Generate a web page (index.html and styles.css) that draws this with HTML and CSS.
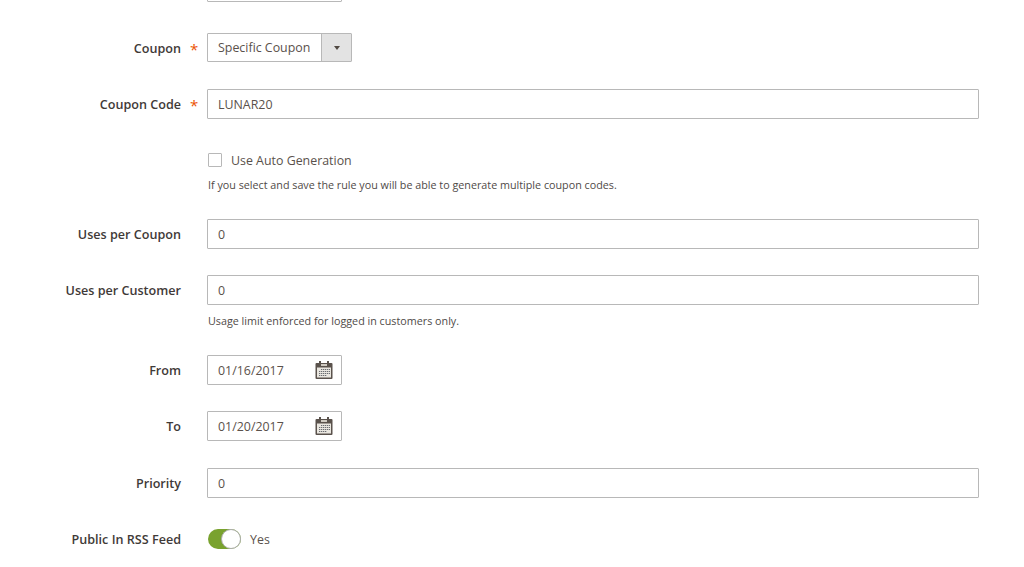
FILE: index.html
```html
<!DOCTYPE html>
<html lang="en">
<head>
    <meta charset="UTF-8">
    <title>Cart Price Rule</title>
    <link rel="stylesheet" href="styles.css">
</head>
<body>
    <form class="form">
        <div class="row row-clipped">
            <div class="label"></div>
            <div class="control"><div class="multi-box"></div></div>
        </div>

        <div class="row row-select">
            <div class="label required">Coupon</div>
            <div class="control">
                <div class="select-box">
                    <span class="select-text">Specific Coupon</span>
                    <span class="select-arrow"><span class="arrow-down"></span></span>
                </div>
            </div>
        </div>

        <div class="row">
            <div class="label required">Coupon Code</div>
            <div class="control"><div class="input">LUNAR20</div></div>
        </div>

        <div class="row row-check">
            <div class="label"></div>
            <div class="control">
                <div class="check-line"><span class="checkbox"></span><span>Use Auto Generation</span></div>
                <div class="note">If you select and save the rule you will be able to generate multiple coupon codes.</div>
            </div>
        </div>

        <div class="row">
            <div class="label">Uses per Coupon</div>
            <div class="control"><div class="input">0</div></div>
        </div>

        <div class="row">
            <div class="label">Uses per Customer</div>
            <div class="control">
                <div class="input">0</div>
                <div class="note">Usage limit enforced for logged in customers only.</div>
            </div>
        </div>

        <div class="row">
            <div class="label">From</div>
            <div class="control">
                <div class="input date">01/16/2017
                    <svg class="cal" width="20" height="20" viewBox="0 0 20 20"><rect x="1.5" y="3" width="17" height="16" rx="1" fill="#5a524c"/><rect x="3" y="7.5" width="14" height="10" fill="#e9e6df"/><rect x="5" y="1" width="2" height="4.5" fill="#5a524c"/><rect x="13" y="1" width="2" height="4.5" fill="#5a524c"/><rect x="7" y="4" width="6" height="2" fill="#cfcac1"/><path d="M7 9.5h9M5 11.5h11M5 13.5h11M5 15.5h8" stroke="#6b6d72" stroke-width="1.2" stroke-dasharray="1.3 .7" fill="none"/></svg>
                </div>
            </div>
        </div>

        <div class="row row-to">
            <div class="label">To</div>
            <div class="control">
                <div class="input date">01/20/2017
                    <svg class="cal" width="20" height="20" viewBox="0 0 20 20"><rect x="1.5" y="3" width="17" height="16" rx="1" fill="#5a524c"/><rect x="3" y="7.5" width="14" height="10" fill="#e9e6df"/><rect x="5" y="1" width="2" height="4.5" fill="#5a524c"/><rect x="13" y="1" width="2" height="4.5" fill="#5a524c"/><rect x="7" y="4" width="6" height="2" fill="#cfcac1"/><path d="M7 9.5h9M5 11.5h11M5 13.5h11M5 15.5h8" stroke="#6b6d72" stroke-width="1.2" stroke-dasharray="1.3 .7" fill="none"/></svg>
                </div>
            </div>
        </div>

        <div class="row">
            <div class="label">Priority</div>
            <div class="control"><div class="input">0</div></div>
        </div>

        <div class="row row-toggle">
            <div class="label">Public In RSS Feed</div>
            <div class="control toggle-line">
                <span class="toggle"><span class="knob"></span></span>
                <span>Yes</span>
            </div>
        </div>
    </form>
</body>
</html>
```

FILE: styles.css
```css
html, body {
    height: 100%;
    overflow: hidden;
}
body {
    margin: 0;
    background: #fff;
    font-family: 'Open Sans', sans-serif;
    font-size: 12.4px;
    color: #5a514b;
}
.form {
    margin-top: -27px;
    width: 979px;
}
.row {
    display: grid;
    grid-template-columns: 181px 1fr;
    column-gap: 26px;
    margin-bottom: 26px;
    align-items: start;
}
.row-clipped {
    margin-bottom: 31px;
}
.row-select {
    margin-bottom: 27px;
}
.row-check {
    margin-top: 33px;
}
.label {
    position: relative;
    height: 29px;
    text-align: right;
    font-size: 12.6px;
    font-weight: 600;
    line-height: 31px;
    color: #3f3a38;
}
.required::after {
    content: '*';
    position: absolute;
    left: 100%;
    margin-left: 9px;
    top: 1px;
    color: #eb5202;
    font-weight: 400;
    font-size: 15px;
}
.multi-box {
    width: 135px;
    height: 29px;
    box-sizing: border-box;
    border: 1px solid #b8b8b8;
    border-radius: 1px;
}
.input {
    box-sizing: border-box;
    height: 30px;
    line-height: 29px;
    padding-left: 10px;
    border: 1px solid #b8b8b8;
    border-radius: 1px;
}
.date {
    position: relative;
    width: 135px;
}
.cal {
    position: absolute;
    right: 7px;
    top: 4px;
}
.select-box {
    display: flex;
    width: 145px;
    height: 29px;
    box-sizing: border-box;
    border: 1px solid #b8b8b8;
    border-radius: 1px;
    line-height: 27px;
}
.select-text {
    flex: 1;
    padding-left: 10px;
    white-space: nowrap;
}
.select-arrow {
    width: 29px;
    display: flex;
    align-items: center;
    justify-content: center;
    background: #e3e3e3;
    border-left: 1px solid #b8b8b8;
}
.arrow-down {
    width: 0;
    height: 0;
    border-left: 3.5px solid transparent;
    border-right: 3.5px solid transparent;
    border-top: 4px solid #514943;
}
.check-line {
    display: flex;
    align-items: center;
    gap: 9px;
    height: 16px;
    padding-left: 1px;
}
.checkbox {
    width: 14px;
    height: 14px;
    box-sizing: border-box;
    border: 1px solid #b8b8b8;
    border-radius: 1px;
}
.note {
    margin-top: 9px;
    padding-left: 1px;
    font-size: 10.75px;
    line-height: 15px;
    color: #4f4a47;
}
.row-check .note {
    margin-top: 10px;
}
.row-to {
    margin-bottom: 27px;
}
.row-toggle {
    margin-top: 30px;
}
.toggle-line {
    display: flex;
    align-items: center;
    gap: 9px;
    height: 22px;
    padding-left: 1px;
}
.row-toggle .label {
    height: 22px;
    line-height: 23px;
}
.toggle {
    position: relative;
    width: 33px;
    height: 20px;
    border-radius: 10px;
    background: #79a22e;
}
.knob {
    position: absolute;
    right: 0;
    top: 0;
    width: 20px;
    height: 20px;
    box-sizing: border-box;
    background: #fff;
    border: 1px solid #adadad;
    border-radius: 50%;
}
```
